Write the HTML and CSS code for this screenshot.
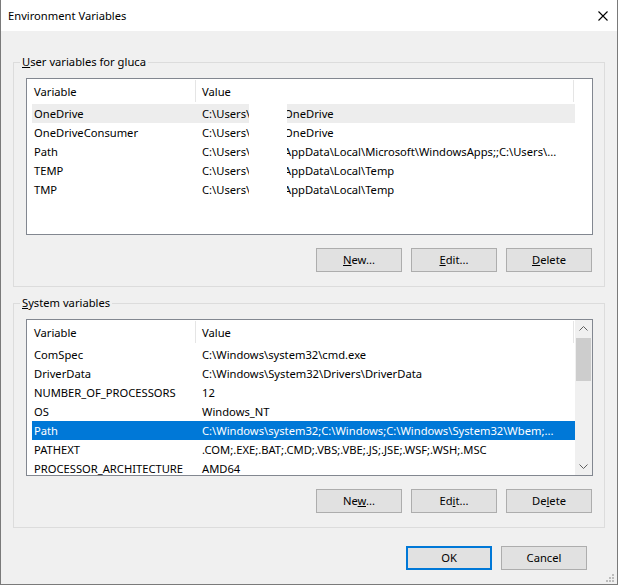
FILE: index.html
```html
<!DOCTYPE html>
<html>
<head>
<meta charset="utf-8">
<title>Environment Variables</title>
<link rel="stylesheet" href="styles.css">
</head>
<body>
<div class="window">
  <div class="titlebar">
    <span class="title">Environment Variables</span>
    <svg class="close" width="10" height="10" viewBox="0 0 10 10"><path d="M0.5 0.5L9.5 9.5M9.5 0.5L0.5 9.5" stroke="#000" stroke-width="1.1" fill="none"/></svg>
  </div>
  <div class="content">
    <fieldset class="group">
      <legend><u>U</u>ser variables for gluca</legend>
      <div class="list list-user">
        <div class="list-main">
          <div class="lhead"><div class="hcol1">Variable</div><div class="hcol2">Value</div></div>
          <div class="rows">
            <div class="row hot"><div class="c1">OneDrive</div><div class="c2"><span class="vpre">C:\Users\gluca</span><span class="vgap"></span><span class="vpost"><span class="vin">OneDrive</span></span></div></div>
            <div class="row"><div class="c1">OneDriveConsumer</div><div class="c2"><span class="vpre">C:\Users\gluca</span><span class="vgap"></span><span class="vpost"><span class="vin">OneDrive</span></span></div></div>
            <div class="row"><div class="c1">Path</div><div class="c2"><span class="vpre">C:\Users\gluca</span><span class="vgap"></span><span class="vpost"><span class="vin">AppData\Local\Microsoft\WindowsApps;;C:\Users\...</span></span></div></div>
            <div class="row"><div class="c1">TEMP</div><div class="c2"><span class="vpre">C:\Users\gluca</span><span class="vgap"></span><span class="vpost"><span class="vin">AppData\Local\Temp</span></span></div></div>
            <div class="row"><div class="c1">TMP</div><div class="c2"><span class="vpre">C:\Users\gluca</span><span class="vgap"></span><span class="vpost"><span class="vin">AppData\Local\Temp</span></span></div></div>
          </div>
        </div>
      </div>
      <div class="btns">
        <button><u>N</u>ew...</button>
        <button><u>E</u>dit...</button>
        <button><u>D</u>elete</button>
      </div>
    </fieldset>
    <fieldset class="group group-sys">
      <legend><u>S</u>ystem variables</legend>
      <div class="list">
        <div class="list-main">
          <div class="lhead"><div class="hcol1">Variable</div><div class="hcol2">Value</div></div>
          <div class="rows">
            <div class="row"><div class="c1">ComSpec</div><div class="c2">C:\Windows\system32\cmd.exe</div></div>
            <div class="row"><div class="c1">DriverData</div><div class="c2">C:\Windows\System32\Drivers\DriverData</div></div>
            <div class="row"><div class="c1">NUMBER_OF_PROCESSORS</div><div class="c2">12</div></div>
            <div class="row"><div class="c1">OS</div><div class="c2">Windows_NT</div></div>
            <div class="row sel"><div class="c1">Path</div><div class="c2">C:\Windows\system32;C:\Windows;C:\Windows\System32\Wbem;...</div></div>
            <div class="row"><div class="c1">PATHEXT</div><div class="c2">.COM;.EXE;.BAT;.CMD;.VBS;.VBE;.JS;.JSE;.WSF;.WSH;.MSC</div></div>
            <div class="row"><div class="c1">PROCESSOR_ARCHITECTURE</div><div class="c2">AMD64</div></div>
          </div>
        </div>
        <div class="sb">
          <div class="sb-btn"><svg width="9" height="5" viewBox="0 0 9 5"><path d="M0.5 4.5L4.5 0.5L8.5 4.5" stroke="#606060" fill="none"/></svg></div>
          <div class="sb-thumb"></div>
          <div class="sb-track"></div>
          <div class="sb-btn"><svg width="9" height="5" viewBox="0 0 9 5"><path d="M0.5 0.5L4.5 4.5L8.5 0.5" stroke="#606060" fill="none"/></svg></div>
        </div>
      </div>
      <div class="btns">
        <button>Ne<u>w</u>...</button>
        <button>Ed<u>i</u>t...</button>
        <button>De<u>l</u>ete</button>
      </div>
    </fieldset>
    <div class="footer">
      <button class="default">OK</button>
      <button>Cancel</button>
    </div>
  </div>
  <svg class="grip" width="8" height="8" viewBox="0 0 8 8">
    <rect x="6" y="0" width="2" height="2" fill="#bcbcbc"/>
    <rect x="3" y="3" width="2" height="2" fill="#bcbcbc"/>
    <rect x="6" y="3" width="2" height="2" fill="#bcbcbc"/>
    <rect x="0" y="6" width="2" height="2" fill="#bcbcbc"/>
    <rect x="3" y="6" width="2" height="2" fill="#bcbcbc"/>
    <rect x="6" y="6" width="2" height="2" fill="#bcbcbc"/>
  </svg>
</div>
</body>
</html>
```

FILE: styles.css
```css
* { box-sizing: border-box; }
html, body { margin: 0; padding: 0; }
body {
  font-family: "Noto Sans", "Open Sans", sans-serif;
  font-size: 11.2px;
  color: #000;
  background: #5a5a5a;
}
.window {
  position: relative;
  width: 618px;
  height: 585px;
  background: #f0f0f0;
  border: 1px solid #7a7a7a;
  border-top: 0;
  display: flex;
  flex-direction: column;
}
.titlebar {
  height: 31px;
  flex: none;
  background: #fff;
  display: flex;
  align-items: center;
  justify-content: space-between;
  padding-left: 7px;
  padding-right: 9px;
}
.title { line-height: 16px; }
.close { display: block; }
.content {
  flex: 1;
  padding: 0 12px;
  display: flex;
  flex-direction: column;
}
.group {
  margin: 23px 0 0;
  border: 1px solid #dcdcdc;
  padding: 8px 11px 14px 6px;
  min-width: 0;
}
.group-sys { margin-top: 8px; }
legend {
  padding: 0 2px;
  line-height: 16px;
}
.list {
  margin-left: 6px;
  height: 157px;
  border: 1px solid #828790;
  background: #fff;
  display: flex;
  overflow: hidden;
}
.list-user { padding-right: 17px; }
.list-main {
  flex: 1;
  min-width: 0;
  display: flex;
  flex-direction: column;
}
.lhead {
  flex: none;
  display: flex;
  height: 25px;
  line-height: 25px;
  white-space: nowrap;
}
.hcol1, .hcol2 {
  background: linear-gradient(#e5e5e5, #e5e5e5) right 1px / 1px 22px no-repeat;
}
.hcol1 { width: 169px; padding-left: 7px; }
.hcol2 { width: 378px; padding-left: 6px; }
.rows {
  flex: 1;
  overflow: hidden;
  padding-left: 5px;
}
.row {
  display: flex;
  height: 19px;
  line-height: 19px;
  white-space: nowrap;
}
.row.hot { background: #ededed; }
.row.sel { background: #0078d7; color: #fff; }
.c1 { width: 168px; flex: none; padding-left: 2px; overflow: hidden; }
.c2 { flex: 1; min-width: 0; padding-left: 2px; overflow: hidden; display: flex; }
.vpre { width: 47px; flex: none; overflow: hidden; }
.vgap { width: 38px; flex: none; background: #fff; }
.vpost { flex: 1; min-width: 0; overflow: hidden; }
.vin { display: inline-block; margin-left: -3px; }
.sb {
  width: 17px;
  flex: none;
  background: #f0f0f0;
  display: flex;
  flex-direction: column;
}
.sb-btn {
  height: 17px;
  flex: none;
  display: flex;
  align-items: center;
  justify-content: center;
}
.sb-thumb {
  flex: none;
  height: 43px;
  margin: 1px 1px 0;
  background: #cdcdcd;
}
.sb-track { flex: 1; }
.btns {
  display: flex;
  justify-content: flex-end;
  gap: 9px;
  margin-top: 13px;
  padding-right: 1px;
}
button {
  width: 86px;
  height: 24px;
  padding: 0;
  margin: 0;
  border: 1px solid #adadad;
  background: #e1e1e1;
  font: inherit;
  color: #000;
  line-height: 20px;
}
button.default { border: 2px solid #0078d7; }
.footer {
  display: flex;
  justify-content: flex-end;
  gap: 9px;
  margin-top: 18px;
  padding-right: 18px;
}
.grip {
  position: absolute;
  right: 3px;
  bottom: 2px;
}
```
